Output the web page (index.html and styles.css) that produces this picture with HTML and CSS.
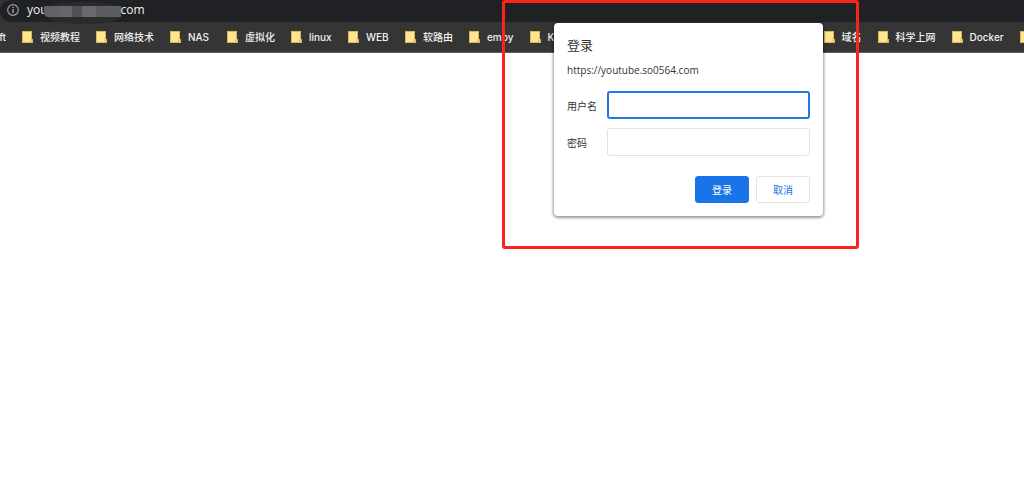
FILE: index.html
```html
<!DOCTYPE html>
<html lang="zh-CN">
<head>
<meta charset="utf-8">
<title>登录</title>
<link rel="stylesheet" href="styles.css">
</head>
<body>
<svg class="defs" aria-hidden="true">
  <symbol id="folder" viewBox="0 0 11 12">
    <path d="M0 0h10v8h1v4H0z" fill="#d9b94f"/>
    <path d="M1 1h8v7l-1 3H1z" fill="#ffe592"/>
    <path d="M9 8.500h1V11H8z" fill="#f3cf62"/>
  </symbol>
</svg>
<header class="browser">
  <div class="address">
    <svg class="info" viewBox="0 0 12 12" aria-hidden="true">
      <circle cx="6" cy="6" r="5.300" fill="none" stroke="#9b9da1" stroke-width="1.200"/>
      <path d="M6 5v4M6 2.700v1.400" stroke="#b0b2b5" stroke-width="1.300"/>
    </svg>
    <span class="host">you</span>
    <svg class="mask" viewBox="0 0 82 24" aria-hidden="true">
      <path d="M2 13C2 4 20 2 42 2s37 2 37 11c0 8-14 11-35 11S2 21 2 13z" fill="#2b2b2d"/>
      <path d="M2 6h15v11H7q-5 0-5-5z" fill="#626268"/>
      <path d="M17 6h13v11H17z" fill="#66666c"/>
      <path d="M30 6h10v11H30z" fill="#534f54"/>
      <path d="M40 6h14v11H40z" fill="#68696c"/>
      <path d="M54 6h25v11H54z" fill="#5c5d60"/>
    </svg>
    <span class="host">com</span>
  </div>
  <nav class="bookmarks">
    <a class="bookmark clipped" href="#">ft</a>
    <a class="bookmark" href="#"><svg class="folder"><use href="#folder"/></svg>视频教程</a>
    <a class="bookmark" href="#"><svg class="folder"><use href="#folder"/></svg>网络技术</a>
    <a class="bookmark latin" href="#"><svg class="folder"><use href="#folder"/></svg>NAS</a>
    <a class="bookmark" href="#"><svg class="folder"><use href="#folder"/></svg>虚拟化</a>
    <a class="bookmark latin" href="#"><svg class="folder"><use href="#folder"/></svg>linux</a>
    <a class="bookmark latin" href="#"><svg class="folder"><use href="#folder"/></svg>WEB</a>
    <a class="bookmark" href="#"><svg class="folder"><use href="#folder"/></svg>软路由</a>
    <a class="bookmark latin" href="#"><svg class="folder"><use href="#folder"/></svg>emby</a>
    <a class="bookmark covered" href="#"><svg class="folder"><use href="#folder"/></svg>K</a>
    <a class="bookmark" href="#"><svg class="folder"><use href="#folder"/></svg>域名</a>
    <a class="bookmark" href="#"><svg class="folder"><use href="#folder"/></svg>科学上网</a>
    <a class="bookmark latin" href="#"><svg class="folder"><use href="#folder"/></svg>Docker</a>
    <a class="bookmark" href="#" aria-label="文件夹"><svg class="folder"><use href="#folder"/></svg></a>
  </nav>
</header>
<form class="dialog" role="dialog" aria-labelledby="title">
  <h1 class="title" id="title">登录</h1>
  <p class="origin">https://youtube.so0564.com</p>
  <div class="field">
    <label class="label" for="user">用户名</label>
    <input class="input focused" id="user" type="text">
  </div>
  <div class="field">
    <label class="label" for="pass">密码</label>
    <input class="input" id="pass" type="password">
  </div>
  <div class="actions">
    <button class="button primary" type="submit">登录</button>
    <button class="button" type="button">取消</button>
  </div>
</form>
<div class="highlight"></div>
</body>
</html>
```
FILE: styles.css
```css
* {
  box-sizing: border-box;
}

body {
  position: relative;
  margin: 0;
  overflow: hidden;
  min-height: 100vh;
  background: #fff;
  font-family: "Open Sans", "Noto Sans CJK SC", sans-serif;
  font-size: 10px;
}

.defs {
  position: absolute;
  width: 0;
  height: 0;
}

.browser {
  background: #353535;
  border-bottom: 1px solid #5c5c5c;
}

.address {
  display: flex;
  align-items: center;
  height: 22px;
  padding: 0 0 2px 7px;
  border-radius: 11px 0 0 11px;
  background: #202124;
  color: #f1f1f1;
  font-size: 12px;
  line-height: 20px;
}

.info {
  width: 12px;
  height: 12px;
  margin-right: 8px;
}

.mask {
  position: relative;
  z-index: 1;
  width: 82px;
  height: 24px;
  margin: 4px -3px 0 -6px;
  flex: none;
}

.host {
  position: relative;
}

.host:last-child {
  z-index: 2;
}

.bookmarks {
  display: flex;
  align-items: center;
  gap: 16px;
  height: 30px;
  overflow: hidden;
}

.bookmark {
  display: flex;
  flex: none;
  align-items: center;
  gap: 7px;
  color: #f1f1f1;
  font-family: Inter, "Noto Sans CJK SC", sans-serif;
  font-weight: 500;
  line-height: 16px;
  text-decoration: none;
  white-space: nowrap;
}

.latin {
  min-width: 41px;
}

.clipped {
  justify-content: flex-end;
  width: 6px;
}

.folder {
  width: 11px;
  height: 12px;
}

.covered {
  width: 278px;
}

.dialog {
  position: absolute;
  top: 23px;
  left: 554px;
  width: 269px;
  padding: 12px 13px 13px;
  border-radius: 4px;
  background: #fff;
  box-shadow: 0 1px 3px 1px rgba(0, 0, 0, 0.4);
  color: #333;
}

.title {
  margin: 0 0 8px;
  font-size: 13px;
  font-weight: 400;
  line-height: 20px;
}

.origin {
  margin: 0 0 14px;
  line-height: 14px;
}

.field {
  display: flex;
  align-items: center;
  margin-bottom: 9px;
}

.label {
  flex: none;
  width: 40px;
}

.input {
  flex: 1;
  min-width: 0;
  height: 28px;
  padding: 0 6px;
  border: 1px solid #e2e2e4;
  border-radius: 3px;
  background: #fff;
  font: inherit;
  outline: 0;
}

.focused {
  border: 2px solid #2376e5;
}

.actions {
  display: flex;
  justify-content: flex-end;
  gap: 7px;
  margin-top: 20px;
}

.button {
  width: 54px;
  height: 27px;
  padding: 0;
  border: 1px solid #e2e2e4;
  border-radius: 3px;
  background: #fff;
  color: #1a73e8;
  font: inherit;
}

.primary {
  border-color: #1a73e8;
  background: #1a73e8;
  color: #fff;
}

.highlight {
  position: absolute;
  top: 0;
  left: 502px;
  width: 357px;
  height: 249px;
  border: 3px solid #fb2419;
  border-radius: 3px;
  pointer-events: none;
}
```
